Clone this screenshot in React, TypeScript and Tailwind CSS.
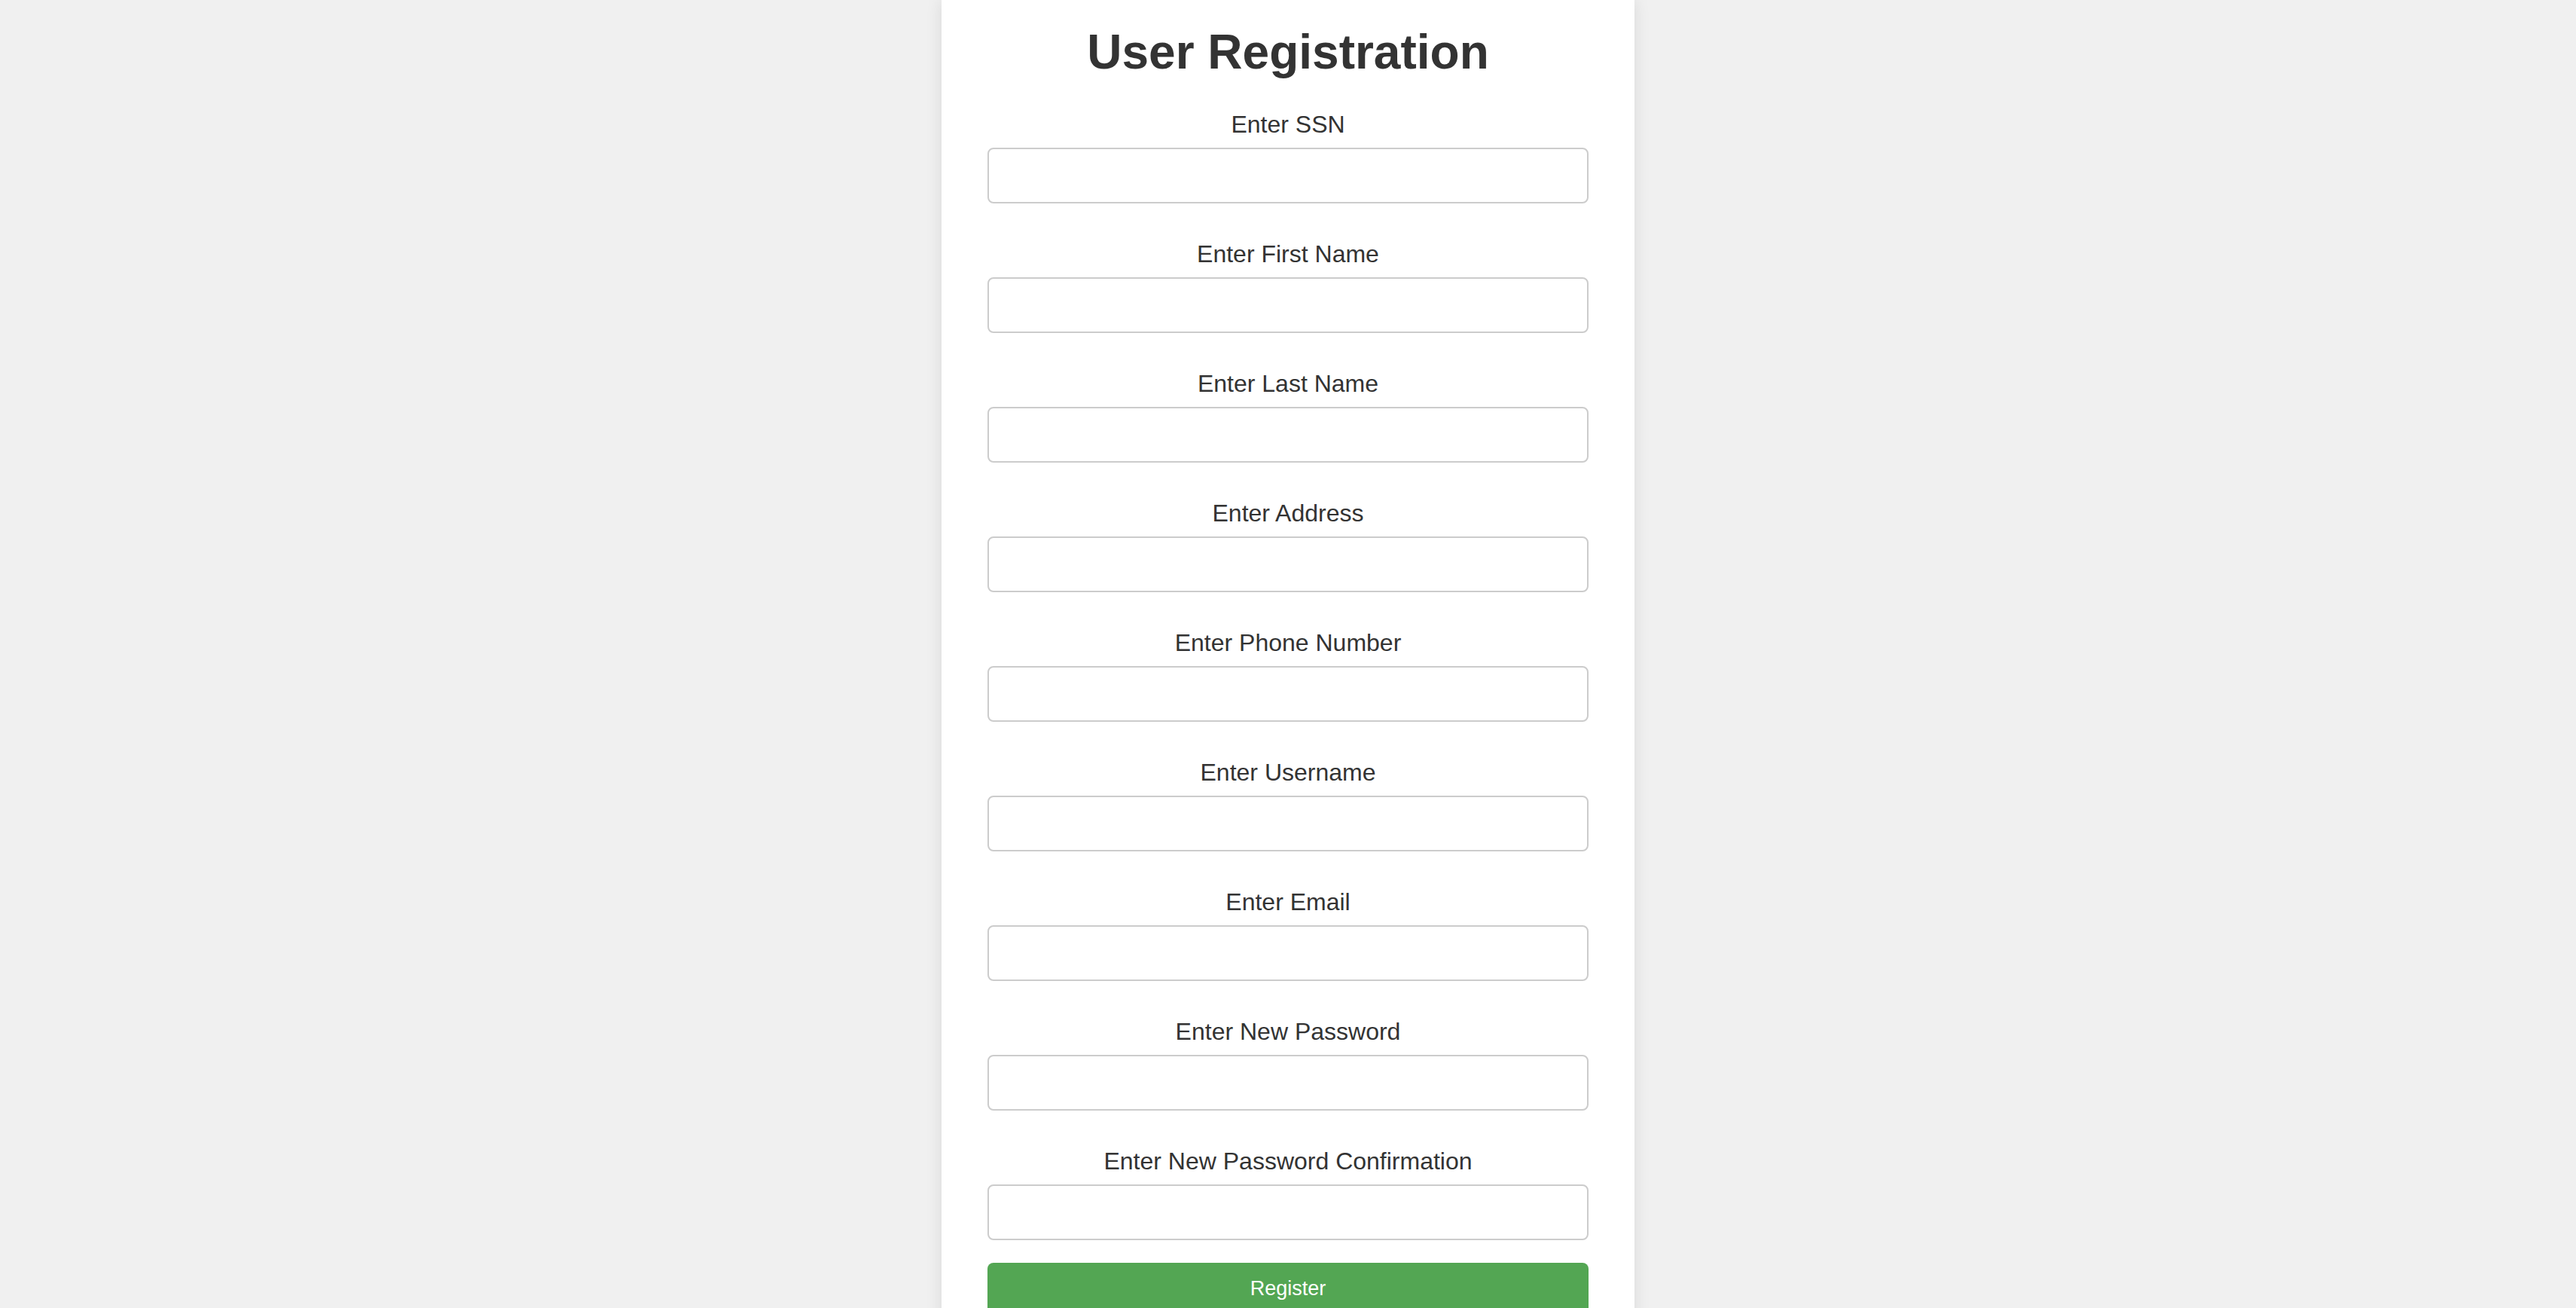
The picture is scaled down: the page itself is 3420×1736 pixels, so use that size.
import React from 'react';

const fields = [
  'Enter SSN',
  'Enter First Name',
  'Enter Last Name',
  'Enter Address',
  'Enter Phone Number',
  'Enter Username',
  'Enter Email',
  'Enter New Password',
  'Enter New Password Confirmation',
];

const App: React.FC = () => {
  return (
    <div className="min-h-screen bg-[#f0f0f0] flex justify-center font-['Liberation_Sans',Arial,sans-serif]">
      <div className="w-[920px] bg-white px-[61px] pt-[32px] pb-[40px] shadow-[0_0_20px_rgba(0,0,0,0.1)]">
        <h1 className="text-center text-[64px] leading-[74px] font-bold text-[#333] mb-[41px]">
          User Registration
        </h1>
        <form className="flex flex-col">
          {fields.map((label, i) => (
            <div key={label} className={i < fields.length - 1 ? 'mb-[49px]' : ''}>
              <label className="block text-center text-[32px] leading-[37px] text-[#333]">{label}</label>
              <input
                type={label.includes('Password') ? 'password' : 'text'}
                className="mt-[12px] block w-full h-[74px] border-2 border-[#cccccc] rounded-[8px] bg-white px-4 text-[28px] outline-none"
              />
            </div>
          ))}
          <button
            type="button"
            className="mt-[30px] w-full h-[68px] rounded-[8px] bg-[#53a653] text-white text-[27px] leading-none"
          >
            Register
          </button>
        </form>
      </div>
    </div>
  );
};

export default App;
